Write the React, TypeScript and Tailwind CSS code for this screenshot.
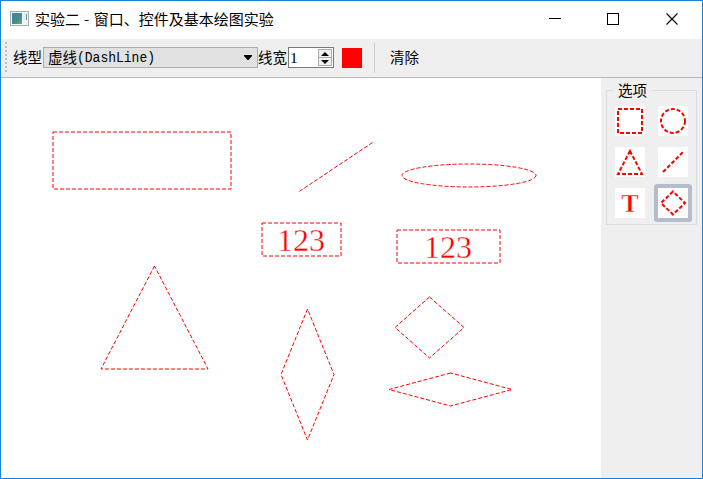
import type { ReactNode } from "react";

function AppIcon() {
  return (
    <svg width="20" height="16" viewBox="0 0 20 16" className="block">
      <defs>
        <linearGradient id="screen" x1="0" y1="0" x2="1" y2="1">
          <stop offset="0" stopColor="#477fad" />
          <stop offset="0.55" stopColor="#438b8a" />
          <stop offset="1" stopColor="#66ad72" />
        </linearGradient>
      </defs>
      <rect x="0.5" y="0.5" width="18" height="14" fill="#f4f5f6" stroke="#a5abaf" />
      <rect x="2" y="2" width="10" height="11" fill="url(#screen)" />
      <rect x="13" y="2" width="4" height="7" fill="#e3eaf2" />
      <rect x="16" y="3" width="1" height="6" fill="#599a9d" />
    </svg>
  );
}

function TitleBar() {
  return (
    <header className="flex h-[38px] shrink-0 items-center bg-white pb-[2px] pl-[9px]">
      <AppIcon />
      <h1 className="ml-[5px] whitespace-pre font-['Noto_Sans_CJK_SC',sans-serif] text-[15px] leading-5">
        实验二<span className="tracking-[0.6px]"> - </span>窗口、控件及基本绘图实验
      </h1>
      <svg width="130" height="14" viewBox="0 0 130 14" className="ml-auto mr-[23px] block" fill="none" stroke="#000" shapeRendering="crispEdges">
        <path d="M0 6.5H12" />
        <rect x="58.5" y="1.5" width="11" height="11" />
        <path d="M117.5 1.5L128.5 12.5M128.5 1.5L117.5 12.5" shapeRendering="auto" strokeWidth="1.1" />
      </svg>
    </header>
  );
}

function Grip() {
  return (
    <div className="mt-[3px] flex w-[2px] flex-col gap-[2px]">
      {[0, 1, 2, 3, 4, 5, 6, 7].map((n) => (
        <i key={n} className="block size-[2px] bg-[#bdbdbd]" />
      ))}
    </div>
  );
}

function Toolbar() {
  return (
    <div className="flex h-[39px] shrink-0 border-b border-[#b8b8b8] pl-[4px] text-[14.5px] leading-[21px]">
      <Grip />
      <span className="ml-[6px] mt-[9px] w-[30px] whitespace-nowrap">线型</span>
      <div className="mt-[8px] flex h-[21px] w-[215px] border border-[#adadad] bg-[#e1e1e1] pl-[4px]">
        <span className="flex leading-[19px]">
          <span className="leading-[20px]">虚线</span>
          <span className="inline-block scale-y-115 font-['Liberation_Mono',monospace] text-[13px]">(DashLine)</span>
        </span>
        <svg width="8" height="5" viewBox="0 0 8 5" className="ml-auto mr-[5px] mt-[7px]">
          <path d="M0 0H8V1L4.5 5H3.5L0 1Z" />
        </svg>
      </div>
      <span className="mt-[9px] w-[30px] whitespace-nowrap">线宽</span>
      <div className="mt-[8px] flex h-[21px] w-[46px] justify-between border border-[#7a7a7a] bg-white pl-[1px]">
        <span className="text-[15.5px] leading-[20px]">1</span>
        <div className="mr-px mt-px flex h-[17px] w-[14px] flex-col">
          <div className="flex flex-1 items-center justify-center border border-[#acacac] bg-[#efefef]">
            <svg width="8" height="4" viewBox="0 0 8 4"><path d="M0 4L4 0L8 4Z" /></svg>
          </div>
          <div className="flex flex-1 items-center justify-center border border-t-0 border-[#acacac] bg-[#efefef]">
            <svg width="8" height="4" viewBox="0 0 8 4"><path d="M0 0H8L4 4Z" /></svg>
          </div>
        </div>
      </div>
      <div className="ml-[8px] mt-[9px] size-[20px] bg-[#ff0000]" />
      <div className="ml-[12px] mt-[4px] h-[30px] w-px bg-[#cfcfcf]" />
      <span className="ml-[15px] mt-[9px]">清除</span>
    </div>
  );
}

function Drawing() {
  return (
    <svg width="600" height="400" viewBox="1 78 600 400" className="block shrink-0 bg-white">
      <g fill="none" stroke="#ff0000" strokeDasharray="4 2">
        <path d="M53 132H231V189H53Z" />
        <path d="M372.5 142.5L298.5 192" />
        <ellipse cx="469" cy="175.5" rx="67" ry="11.5" />
        <path d="M262 223H341V256H262Z" />
        <path d="M397 230H500V263H397Z" />
        <path d="M154.5 266L101 369H208Z" />
        <path d="M307.5 309L281 374.5L307.5 440L334 374.5Z" />
        <path d="M429.5 297L395 327.5L429.5 358L464 327.5Z" />
        <path d="M450.5 373L389 389.5L450.5 406L512 389.5Z" />
      </g>
      <g fill="#ff0000" stroke="#fff" strokeWidth="0.3" fontFamily="'Liberation Serif', serif" fontSize="32" textAnchor="middle">
        <text x="301" y="251">123</text>
        <text x="448" y="258">123</text>
      </g>
    </svg>
  );
}

function Tool({ selected = false, children }: { selected?: boolean; children: ReactNode }) {
  return (
    <button className={selected ? "-m-[4px] rounded-[3px] bg-[#b4bdcb] p-[4px]" : "block"}>
      <svg width="30" height="30" viewBox="0 0 30 30" className="block bg-white" fill="none" stroke="#ff0000" strokeWidth="2" strokeDasharray="4 2">
        {children}
      </svg>
    </button>
  );
}

function OptionsPanel() {
  return (
    <aside className="flex-1 pl-[5px] pt-[2px]">
      <fieldset className="h-[145px] w-[91px] border border-[#dcdcdc] px-[8px]">
        <legend className="ml-[-2px] h-[21px] px-[5px] text-[14.5px] leading-[22px]">选项</legend>
        <div className="mt-[5px] grid grid-cols-[30px_30px] gap-x-[13px] gap-y-[11px]">
          <Tool><path d="M3 3H27V27H3Z" /></Tool>
          <Tool><circle cx="15" cy="15" r="12" /></Tool>
          <Tool><path d="M15 4L3 27H27Z" /></Tool>
          <Tool><path d="M5 25L25 5" /></Tool>
          <Tool>
            <text x="15" y="24" textAnchor="middle" fill="#ff0000" stroke="#fff" strokeWidth="0.5" strokeDasharray="none" fontFamily="'Liberation Serif', serif" fontWeight="bold" fontSize="26">T</text>
          </Tool>
          <Tool selected><path d="M15 3.5L3 15L15 26.5L27 15Z" /></Tool>
        </div>
      </fieldset>
    </aside>
  );
}

export default function App() {
  return (
    <main className="flex h-[479px] w-[703px] flex-col overflow-hidden border border-[#1883d7] bg-[#efefef] font-['Liberation_Serif','Noto_Sans_CJK_SC',serif] text-black">
      <TitleBar />
      <Toolbar />
      <div className="flex min-h-0 flex-1">
        <Drawing />
        <OptionsPanel />
      </div>
    </main>
  );
}
